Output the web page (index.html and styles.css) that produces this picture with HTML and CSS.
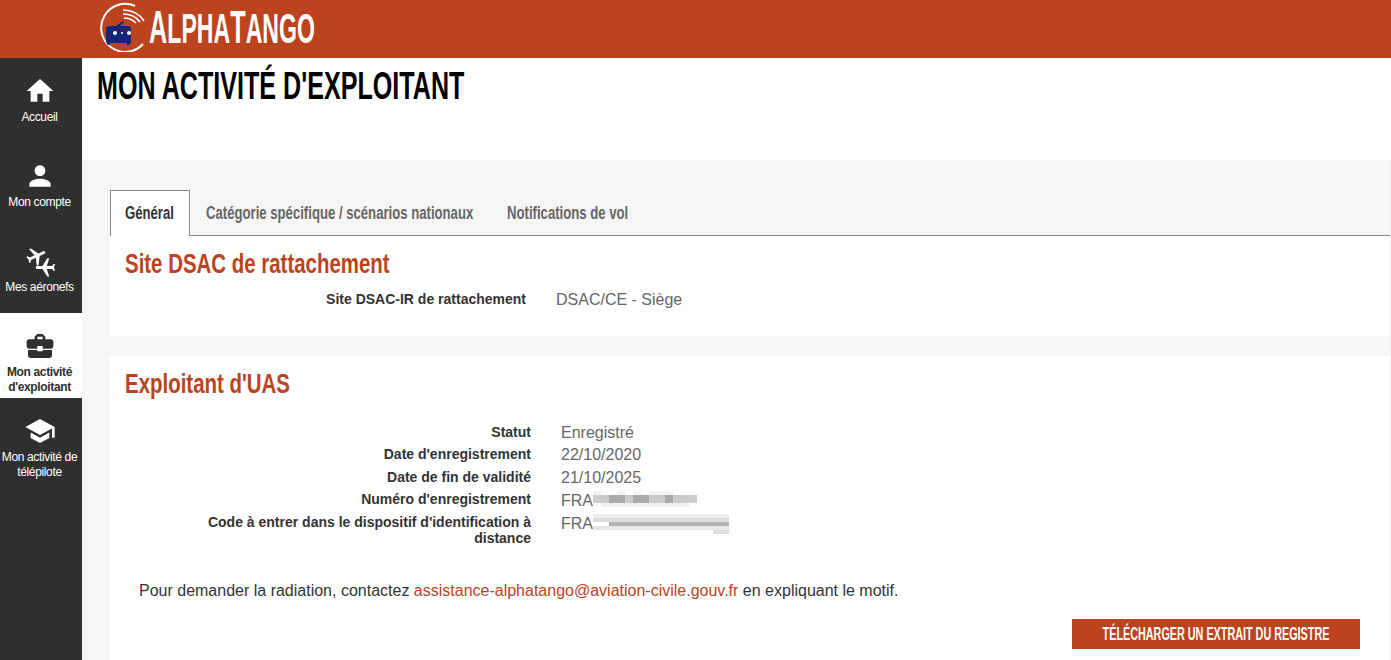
FILE: index.html
```html
<!DOCTYPE html>
<html lang="fr">
<head>
  <meta charset="UTF-8">
  <title>AlphaTango</title>
  <link rel="stylesheet" href="styles.css">
</head>
<body>

  <!-- bandeau -->
  <header class="topbar">
    <svg class="logo-icon" viewBox="0 0 50 50" width="50" height="50">
      <path d="M44 42 A24 24 0 1 1 36 4" fill="none" stroke="#fff" stroke-width="2"/>
      <path d="M24 8 Q38 8 45 19 M24 12 Q35 12 41 20 M25 16 Q32 16 37 21" fill="none" stroke="#fff" stroke-width="1.6"/>
      <path d="M12 24 h5 l7 -5 l1 1 l-4 4 h8 q3 0 3 3 v11 q0 5 -3 5 h-1 v-2 h-17 v2 h-1 q-3 0 -3 -5 v-11 q0 -3 5 -3z" fill="#14267a"/>
      <circle cx="16" cy="31" r="2" fill="#fff"/><circle cx="23" cy="31" r="1" fill="#fff"/><circle cx="30" cy="31" r="2" fill="#fff"/>
    </svg>
    <span class="logo-text"><span class="logo-cap">A</span>lpha<span class="logo-cap">T</span>ango</span>
  </header>

  <div class="layout">
    <!-- menu gauche -->
    <nav class="sidebar">
      <a class="nav-item">
        <svg viewBox="0 0 24 24"><path d="M10 20v-6h4v6h5v-8h3L12 3 2 12h3v8z"/></svg>
        <span>Accueil</span>
      </a>
      <a class="nav-item">
        <svg viewBox="0 0 24 24"><path d="M12 12c2.21 0 4-1.79 4-4s-1.79-4-4-4-4 1.79-4 4 1.79 4 4 4zm0 2c-2.67 0-8 1.34-8 4v2h16v-2c0-2.66-5.33-4-8-4z"/></svg>
        <span>Mon compte</span>
      </a>
      <a class="nav-item">
        <svg viewBox="0 0 24 24">
          <path transform="translate(-2.5 -3.5) rotate(65 12 12) scale(.72) translate(4.7 4.7)" d="M21 16v-2l-8-5V3.5c0-.83-.67-1.5-1.5-1.5S10 2.67 10 3.5V9l-8 5v2l8-2.5V19l-2 1.5V22l3.5-1 3.5 1v-1.5L13 19v-5.5l8 2.5z"/>
          <path transform="translate(4 4.5) rotate(-90 12 12) scale(.72) translate(4.7 4.7)" d="M21 16v-2l-8-5V3.5c0-.83-.67-1.5-1.5-1.5S10 2.67 10 3.5V9l-8 5v2l8-2.5V19l-2 1.5V22l3.5-1 3.5 1v-1.5L13 19v-5.5l8 2.5z"/>
        </svg>
        <span>Mes aéronefs</span>
      </a>
      <a class="nav-item active">
        <svg viewBox="0 0 24 24"><path d="M10 16v-1H3.01L3 19c0 1.11.89 2 2 2h14c1.11 0 2-.89 2-2v-4h-7v1h-4zm10-9h-4.01V5l-2-2h-4l-2 2v2H4c-1.1 0-2 .9-2 2v3c0 1.11.89 2 2 2h6v-2h4v2h6c1.1 0 2-.9 2-2V9c0-1.1-.9-2-2-2zm-6 0h-4V5h4v2z"/></svg>
        <span>Mon activité d'exploitant</span>
      </a>
      <a class="nav-item">
        <svg viewBox="0 0 24 24"><path d="M5 13.18v4L12 21l7-3.82v-4L12 17l-7-3.82zM12 3L1 9l11 6 9-4.91V17h2V9L12 3z"/></svg>
        <span>Mon activité de télépilote</span>
      </a>
    </nav>

    <main class="content">
      <div class="page-head">
        <h1><span class="narrow">Mon activité d'exploitant</span></h1>
      </div>

      <div class="page-body">
        <!-- onglets -->
        <div class="tabs">
          <a class="tab tab-general active"><span class="narrow">Général</span></a>
          <a class="tab tab-categorie"><span class="narrow">Catégorie spécifique / scénarios nationaux</span></a>
          <a class="tab tab-notif"><span class="narrow">Notifications de vol</span></a>
        </div>

        <section class="panel panel-site">
          <h2><span class="narrow">Site DSAC de rattachement</span></h2>
          <div class="row row-site">
            <div class="label">Site DSAC-IR de rattachement</div>
            <div class="value">DSAC/CE - Siège</div>
          </div>
        </section>

        <section class="panel panel-uas">
          <h2><span class="narrow">Exploitant d'UAS</span></h2>
          <div class="fields">
            <div class="row">
              <div class="label">Statut</div>
              <div class="value">Enregistré</div>
            </div>
            <div class="row">
              <div class="label">Date d'enregistrement</div>
              <div class="value">22/10/2020</div>
            </div>
            <div class="row">
              <div class="label">Date de fin de validité</div>
              <div class="value">21/10/2025</div>
            </div>
            <div class="row">
              <div class="label">Numéro d'enregistrement</div>
              <div class="value">FRA<svg class="mosaic" width="104" height="20" viewBox="0 0 13 5" preserveAspectRatio="none" shape-rendering="crispEdges">
                <path fill="#f3f3f3" d="M0 0h1v1H0zM3 0h1v1H3zM5 0h1v1H5zM7 0h3v1H7z"/>
                <path fill="#ccc" d="M0 1h13v2H0z"/>
                <path fill="#aaa" d="M2 1h2v2H2zM5 1h2v2H5zM9 1h1v2H9z"/>
                <path fill="#f0f0f0" d="M1 3h11v1H1z"/>
              </svg></div>
            </div>
            <div class="row row-tall">
              <div class="label">Code à entrer dans le dispositif d'identification à distance</div>
              <div class="value">FRA<svg class="mosaic" width="136" height="20" viewBox="0 0 17 5" preserveAspectRatio="none" shape-rendering="crispEdges">
                <path fill="#f0f0f0" d="M0 0h17v1H0z"/>
                <path fill="#ddd" d="M0 1h17v1H0z"/>
                <path fill="#b4b4b4" d="M2 2h15v1H2z"/>
                <path fill="#e8e8e8" d="M0 3h17v1H0z"/>
                <path fill="#ddd" d="M15 4h2v1h-2z"/>
              </svg></div>
            </div>
          </div>

          <p class="note">Pour demander la radiation, contactez <a class="mail">assistance-alphatango@aviation-civile.gouv.fr</a> en expliquant le motif.</p>

          <div class="actions">
            <a class="btn"><span class="narrow">Télécharger un extrait du registre</span></a>
          </div>
        </section>
      </div>
    </main>
  </div>

</body>
</html>
```

FILE: styles.css
```css
html, body {
  height: 100%;
  margin: 0;
  padding: 0;
  overflow: hidden;
}

body {
  font-family: "Liberation Sans", Arial, sans-serif;
  color: #333;
  background-color: #fff;
}

/* pas de police condensee installee : on resserre le texte */
.narrow {
  display: inline-block;
  white-space: nowrap;
  transform: scaleX(0.73);
  transform-origin: left center;
}

.topbar {
  height: 58px;
  background-color: #bb431d;
  display: flex;
  align-items: center;
  padding-left: 99px;
  box-sizing: border-box;
}

.logo-icon {
  flex: none;
  margin-top: -4px;
}

.logo-text {
  display: inline-block;
  font-size: 42px;
  font-weight: bold;
  text-transform: uppercase;
  white-space: nowrap;
  color: #fff;
  margin-top: -5px;
  transform: scaleX(0.55);
  transform-origin: left center;
}

.logo-cap {
  font-size: 46px;
}

.layout {
  display: flex;
  height: 602px;
}

.sidebar {
  width: 82px;
  flex: none;
  background-color: #2f2f2f;
}

.nav-item {
  display: flex;
  flex-direction: column;
  align-items: center;
  height: 85px;
  padding: 17px 3px 0 0;
  box-sizing: border-box;
  font-size: 12px;
  line-height: 15px;
  letter-spacing: -0.35px;
  text-align: center;
  color: #fff;
  fill: #fff;
}

.nav-item svg {
  width: 32px;
  height: 32px;
  margin-bottom: 3px;
}

.nav-item.active {
  background-color: #fff;
  color: #2f2f2f;
  fill: #2f2f2f;
  font-weight: bold;
}

.content {
  flex: 1;
  display: flex;
  flex-direction: column;
}

.page-head {
  height: 102px;
  padding-left: 15px;
  box-sizing: border-box;
}

h1 {
  margin: 0;
  font-size: 39px;
  line-height: 56px;
  font-weight: bold;
  text-transform: uppercase;
  color: #000;
}

h1 .narrow {
  transform: scaleX(0.644);
}

.page-body {
  flex: 1;
  background-color: #f6f6f6;
  padding: 30px 0 0 28px;
  border-right: 1px solid #eee;
}

.tabs {
  display: flex;
  height: 46px;
  border-bottom: 1px solid #888;
  box-sizing: border-box;
}

.tab {
  flex: none;
  height: 46px;
  padding-left: 16px;
  box-sizing: border-box;
  overflow: visible;
  font-size: 18px;
  line-height: 46px;
  font-weight: bold;
  color: #666;
}

.tab-general {
  width: 80px;
}

.tab-categorie {
  width: 301px;
}

.tab-notif {
  width: 200px;
}

.tab.active {
  background-color: #fff;
  color: #333;
  border: 1px solid #888;
  border-bottom: none;
  padding-left: 14px;
  line-height: 44px;
}

.panel {
  background-color: #fff;
}

.panel-site {
  height: 100px;
  margin-bottom: 20px;
}

.panel-uas {
  height: 304px;
}

h2 {
  margin: 0;
  padding: 1px 0 0 15px;
  font-size: 28px;
  line-height: 54px;
  font-weight: bold;
  color: #bb431d;
}

.row {
  display: grid;
  grid-template-columns: 421px 1fr;
  column-gap: 30px;
  min-height: 22.4px;
}

.row-site {
  grid-template-columns: 416px 1fr;
  margin-top: -1px;
}

.fields {
  padding-top: 12px;
}

.label {
  font-size: 14px;
  line-height: 16px;
  font-weight: bold;
  text-align: right;
  padding-left: 80px;
  padding-top: 1px;
}

.value {
  font-size: 16px;
  line-height: 18px;
  padding-top: 1px;
  color: #666;
}

.mosaic {
  vertical-align: -5px;
}

.note {
  margin: 35px 0 0 29px;
  font-size: 16px;
  line-height: 20px;
}

.mail {
  color: #bb431d;
}

.actions {
  display: flex;
  justify-content: flex-end;
  margin-top: 18px;
  padding-right: 30px;
}

.btn {
  display: flex;
  justify-content: center;
  width: 288px;
  height: 30px;
  background-color: #bb431d;
  color: #fff;
  font-size: 18px;
  line-height: 30px;
  font-weight: bold;
  text-transform: uppercase;
}

.btn .narrow {
  flex: none;
  transform: scaleX(0.6);
  transform-origin: center;
}
```
